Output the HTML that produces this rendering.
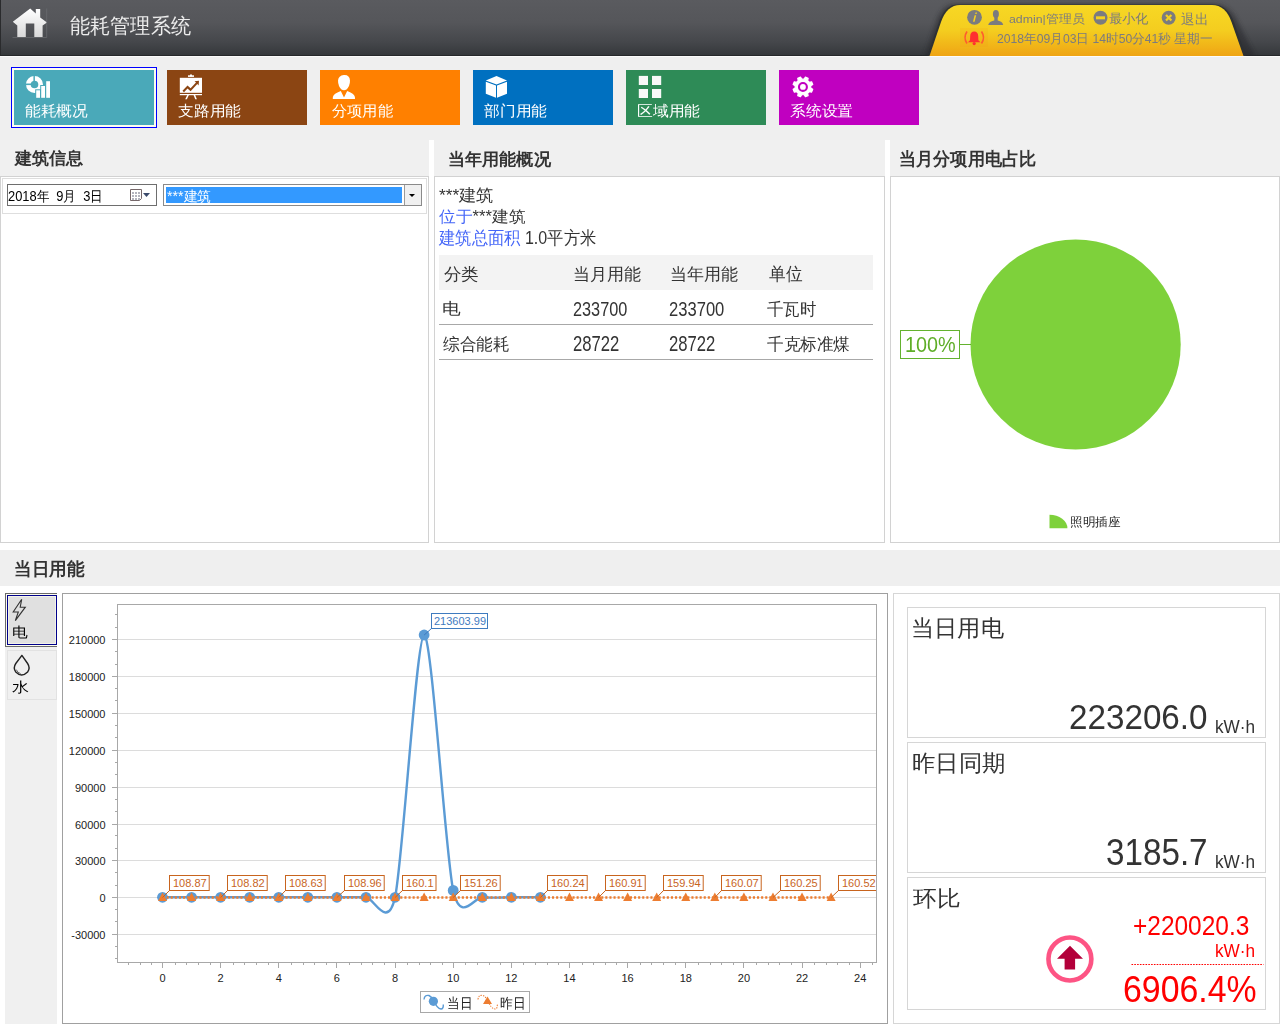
<!DOCTYPE html><html><head><meta charset="utf-8"><title>能耗管理系统</title><style>
*{box-sizing:border-box}
html,body{margin:0;padding:0}
body{width:1280px;height:1024px;overflow:hidden;background:#efefef;font-family:"Liberation Sans",sans-serif;position:relative;color:#333}
.a{position:absolute;white-space:nowrap}
.tile{position:absolute;top:70px;width:140px;height:55px}
.tile .t{position:absolute;left:12px;top:99px;font-size:15px;line-height:20px;color:#fff}
.ptitle{position:absolute;top:140px;height:36px;background:#f0f0f0}
.ptitle span{position:absolute;left:15px;top:7px;font-size:17px;line-height:22px;font-weight:bold;color:#333}
.pbox{position:absolute;top:176px;height:367px;border:1px solid #d2d2d2;background:#fff}
</style></head><body>
<div class="a" style="left:0;top:0;width:1280px;height:56px;background:linear-gradient(#5a5b5f 0%,#55565a 40%,#45474b 75%,#34373a 100%)"></div>
<div class="a" style="left:0;top:0;width:1px;height:56px;background:#2a2b2d"></div>
<div class="a" style="left:0;top:55px;width:1280px;height:1px;background:#26282a"></div>
<div class="a" style="left:0;top:56px;width:1280px;height:1px;background:#fbfbfb"></div>
<svg class="a" style="left:0;top:0" width="60" height="56"><defs><linearGradient id="hg" x1="0" y1="0" x2="0" y2="1"><stop offset="0" stop-color="#ffffff"/><stop offset="1" stop-color="#d9d9d9"/></linearGradient></defs><path d="M30.2 8.6 L35.8 13.6 L35.8 9 L40.2 9 L40.2 17.6 L47 22.4 L42.6 25.4 L42.6 37 L34.3 37 L34.3 23.4 L25.8 23.4 L25.8 37 L17.3 37 L17.3 25.4 L12.8 21.8 Z" fill="url(#hg)"/><path d="M12.5 37.5 H46.7 V8.5" stroke="#707175" stroke-width="0.8" fill="none" opacity="0.8"/></svg>
<svg class="a" style="left:900px;top:0" width="380" height="56">
<defs><linearGradient id="tg" x1="0" y1="0" x2="0" y2="1"><stop offset="0" stop-color="#f7d824"/><stop offset="0.5" stop-color="#f4cd1f"/><stop offset="1" stop-color="#efa414"/></linearGradient>
<filter id="bl" x="-10%" y="-50%" width="120%" height="200%"><feGaussianBlur stdDeviation="2.2"/></filter></defs>
<path d="M24 58 L36 22 Q42 4 56 4 L314 4 Q330 4 338 22 L356 58 Z" fill="#26282b" opacity="0.55" filter="url(#bl)"/>
<path d="M27.5 56 L39 22 Q45 4.5 58 4.5 L313 4.5 Q327.5 4.5 334 22 L346 56 Z" fill="#2e3134" opacity="0.9"/>
<path d="M29.5 56 L41 22 Q47 5 60 5 L312 5 Q325.5 5 331.5 22 L343.5 56 Z" fill="url(#tg)"/>
</svg>
<svg class="a" style="left:966px;top:9px" width="16" height="16"><circle cx="8.5" cy="8.3" r="7.4" fill="#7b7b7f"/><path d="M9.6 3.4 l1.4 0 l-0.4 1.6 l-1.4 0z M8.6 6.2 l1.6 0 l-1.6 6.6 l-1.6 0z" fill="#f5d020"/></svg>
<svg class="a" style="left:988px;top:9px" width="16" height="17"><ellipse cx="7.9" cy="5.1" rx="3.0" ry="4.1" fill="#7b7b7f"/><rect x="6.3" y="7.5" width="3.4" height="4.5" fill="#7b7b7f"/><path d="M0.2 16 Q1.2 12.6 6 11.6 L9.8 11.6 Q14.4 12.6 15.2 16 Z" fill="#7b7b7f"/></svg>
<svg class="a" style="left:1093px;top:10px" width="16" height="16"><circle cx="7.5" cy="7.8" r="7" fill="#7b7b7f"/><rect x="3" y="6.3" width="9" height="3" fill="#f3d020"/></svg>
<svg class="a" style="left:1161px;top:10px" width="16" height="16"><circle cx="7.7" cy="7.8" r="7" fill="#7b7b7f"/><path d="M5 5 L10.4 10.6 M10.4 5 L5 10.6" stroke="#f3d020" stroke-width="2.2"/></svg>
<div class="a" style="left:960px;top:28px;width:28px;height:19px;background:rgba(240,150,20,0.14)"></div>
<svg class="a" style="left:962px;top:29px" width="26" height="18"><path d="M5 2.5 Q1 8.5 5 14.5" stroke="#ff5a30" stroke-width="1.6" fill="none"/><path d="M19.5 2.5 Q23.5 8.5 19.5 14.5" stroke="#ff5a30" stroke-width="1.6" fill="none"/><path d="M12.2 2.4 Q16 2.4 16.2 7 L16.4 11.3 L18.4 13.2 L6 13.2 L8 11.3 L8.2 7 Q8.4 2.4 12.2 2.4Z" fill="#ff3030"/><circle cx="12.2" cy="14.6" r="1.6" fill="#ff3030"/></svg>
<div class="tile" style="left:14px;background:#4aa9b9"></div>
<svg class="a" style="left:0;top:0" width="60" height="130"><path d="M34.5 76 A8.5 8.5 0 1 1 26 84.5 L30.7 84.5 A3.8 3.8 0 1 0 34.5 80.7 Z" fill="#fff"/><path d="M33.6 76 L33.6 80.7 A3.8 3.8 0 0 0 30.7 83.6 L26 83.6 A8.5 8.5 0 0 1 33.6 76Z" fill="#fff"/><rect x="33.7" y="75" width="1.1" height="6.5" fill="#4aa9b9"/><rect x="25" y="84" width="6.5" height="1.1" fill="#4aa9b9"/><rect x="35.2" y="89.3" width="5.8" height="9.5" fill="#4aa9b9"/><rect x="40.2" y="85" width="5.8" height="13.8" fill="#4aa9b9"/><rect x="36.2" y="90.3" width="3.8" height="7.5" fill="#fff"/><rect x="41.2" y="86" width="3.8" height="11.8" fill="#fff"/><rect x="46.2" y="81.2" width="3.8" height="16.6" fill="#fff"/></svg>
<div class="tile" style="left:167px;background:#8b4513"></div>
<svg class="a" style="left:167px;top:70px" width="48" height="35"><rect x="12.8" y="7.8" width="22.2" height="15" fill="#fff"/><rect x="21" y="5.3" width="6" height="1.6" fill="#fff"/><rect x="23" y="4.5" width="2" height="2" fill="#fff"/><rect x="12.8" y="24" width="22.2" height="1.2" fill="#fff"/><path d="M20.3 25 L21.9 25 L19.9 29.3 L18.2 29.3Z M26.6 25 L28.2 25 L29.9 29.3 L28.2 29.3Z" fill="#fff"/><path d="M15.5 20.8 L20.5 15.5 L23.6 18.2 L29 12.5 L27.5 11.3 L32 10.8 L31.6 15.4 L30.3 14 L23.6 21.2 L20.5 18.5 L17 22.2Z" fill="#8b4513"/></svg>
<div class="tile" style="left:320px;background:#ff8000"></div>
<svg class="a" style="left:320px;top:70px" width="48" height="35"><path d="M23.8 5 Q29.5 4.5 30 10.5 Q30 16 26.5 19.5 Q24 20.8 21.5 19.5 Q18 16 18 10.5 Q18.5 5.5 23.8 5Z" fill="#fff"/><path d="M12.8 29 Q12.2 24.5 17.5 22.5 L20.8 21 L24 27.5 L27.2 21 L30.5 22.5 Q35.5 24.5 35 29Z" fill="#fff"/></svg>
<div class="tile" style="left:473px;background:#0070c0"></div>
<svg class="a" style="left:473px;top:70px" width="48" height="35"><path d="M12.8 10.5 L23.5 6 L34 10.5 L23.5 14.5Z" fill="#fff"/><path d="M12.8 11.8 L23 15.5 L23 27.8 L12.8 23.8Z" fill="#fff"/><path d="M24 15.5 L34 11.8 L34 23.8 L24 27.8Z" fill="#fff"/></svg>
<div class="tile" style="left:626px;background:#2e8b57"></div>
<svg class="a" style="left:626px;top:70px" width="48" height="35"><rect x="12.8" y="5.9" width="9.2" height="9.1" fill="#f8f8f8"/><rect x="26" y="5.9" width="9.2" height="9.1" fill="#f8f8f8"/><rect x="12.8" y="19" width="9.2" height="9" fill="#f8f8f8"/><rect x="26" y="19" width="9.2" height="9" fill="#f8f8f8"/></svg>
<div class="tile" style="left:779px;background:#c000c0"></div>
<svg class="a" style="left:779px;top:70px" width="48" height="35"><path d="M25.11 9.13 L26.38 7.14 L29.14 8.28 L28.64 10.59 L30.29 12.24 L32.60 11.74 L33.74 14.50 L31.75 15.77 L31.75 18.11 L33.74 19.38 L32.60 22.14 L30.29 21.64 L28.64 23.29 L29.14 25.60 L26.38 26.74 L25.11 24.75 L22.77 24.75 L21.50 26.74 L18.74 25.60 L19.24 23.29 L17.59 21.64 L15.28 22.14 L14.14 19.38 L16.13 18.11 L16.13 15.77 L14.14 14.50 L15.28 11.74 L17.59 12.24 L19.24 10.59 L18.74 8.28 L21.50 7.14 L22.77 9.13Z" fill="#fff" stroke="#fff" stroke-width="1.2" stroke-linejoin="round"/><circle cx="23.94" cy="16.94" r="3.95" fill="none" stroke="#c000c0" stroke-width="2.1"/></svg>
<div class="a" style="left:11px;top:67px;width:146px;height:61px;border:1px solid #0000ff"></div>
<div class="a" style="left:12px;top:68px;width:144px;height:59px;border:2px solid #fdfdf0"></div>
<div class="a" style="left:0;top:140px;width:1280px;height:410px;background:#fff"></div>
<div class="ptitle" style="left:0px;width:429px"></div>
<div class="pbox" style="left:0px;width:429px"></div>
<div class="ptitle" style="left:434px;width:451px"></div>
<div class="pbox" style="left:434px;width:451px"></div>
<div class="ptitle" style="left:890px;width:390px"></div>
<div class="pbox" style="left:890px;width:390px"></div>
<div class="a" style="left:2px;top:178px;width:425px;height:36px;border:1px solid #dedede;background:#fff"></div>
<div class="a" style="left:7px;top:184px;width:150px;height:22px;border:1px solid #6e6e6e;background:#fff"></div>
<svg class="a" style="left:128px;top:186px" width="26" height="18"><path d="M2.5 3.5 H13.5 V12.5 L11.5 14.5 H2.5 Z" fill="#fff" stroke="#76686a" stroke-width="1"/><g fill="#b3b4be"><rect x="4" y="6" width="2" height="2"/><rect x="7" y="6" width="2" height="2"/><rect x="10" y="6" width="2" height="2"/><rect x="4" y="9" width="2" height="2"/><rect x="7" y="9" width="2" height="2"/><rect x="10" y="9" width="2" height="2"/><rect x="4" y="12" width="2" height="2"/><rect x="7" y="12" width="2" height="2"/><rect x="10" y="12" width="2" height="2"/></g><path d="M15 7 L22 7 L18.5 11Z" fill="#3b4a6b"/></svg>
<div class="a" style="left:163px;top:184px;width:259px;height:22px;border:1px solid #8a8a8a;background:#fff"></div>
<div class="a" style="left:166px;top:187px;width:236px;height:16px;background:#3399ff"></div>
<div class="a" style="left:404px;top:185px;width:17px;height:20px;background:#f0f0f0;border-left:1px solid #9a9a9a"></div>
<svg class="a" style="left:404px;top:185px" width="17" height="20"><path d="M5 9 L11 9 L8 12Z" fill="#000"/></svg>
<div class="a" style="left:439px;top:255px;width:434px;height:35px;background:#f3f3f3"></div>
<div class="a" style="left:439px;top:324px;width:434px;height:1px;background:#a8a8a8"></div>
<div class="a" style="left:439px;top:359px;width:434px;height:1px;background:#a8a8a8"></div>
<svg class="a" style="left:890px;top:176px" width="390" height="367"><circle cx="185.6" cy="168.5" r="105.1" fill="#7ed13b"/><rect x="10.5" y="154.5" width="59" height="28" fill="#fff" stroke="#63b22e" stroke-width="1"/><path d="M70 168.5 H81" stroke="#63b22e" stroke-width="1"/><path d="M159.5 352.2 L159.5 338.8 A17.9 13.4 0 0 1 177.4 352.2 Z" fill="#7ed13b"/></svg>
<div class="a" style="left:0;top:586px;width:1280px;height:438px;background:#fff"></div>
<div class="a" style="left:5px;top:593px;width:52px;height:431px;background:#f0f0f0"></div>
<div class="a" style="left:5px;top:593px;width:52px;height:54px;border:1px solid #6a6a6a;border-right:none;background:#fdfdf0"></div>
<div class="a" style="left:7px;top:595px;width:50px;height:50px;border:1px solid #00008b;background:#e0e0e0"></div>
<div class="a" style="left:8px;top:596px;width:48px;height:48px;border:1px solid #f2f2ea"></div>
<svg class="a" style="left:5px;top:593px" width="52" height="54"><path d="M16.7 6.3 L8.2 19 L13.3 19 L10.3 27.6 L20.3 14.2 L15.2 14.2 Z" fill="none" stroke="#333" stroke-width="1.1" stroke-linejoin="miter"/></svg>
<div class="a" style="left:7px;top:650px;width:50px;height:50px;border:1px solid #e2e2e2;background:#f0f0f0"></div>
<svg class="a" style="left:5px;top:647px" width="52" height="54"><path d="M16.9 8.4 L10.8 16.5 Q7.8 21 10.8 25 Q16.6 31 22.6 25 Q25.6 21 22.6 16.5 Z" fill="none" stroke="#222" stroke-width="1.4" stroke-linejoin="round"/><path d="M11.3 22.6 Q12.2 25.6 15.6 26.6" fill="none" stroke="#555" stroke-width="0.9"/></svg>
<svg class="a" style="left:62px;top:593px" width="826" height="431" font-family="Liberation Sans, sans-serif"><rect x="0.5" y="0.5" width="825" height="430" fill="#fff" stroke="#a0a0a0"/><path d="M56 341.5 H814" stroke="#dcdcdc" stroke-width="1"/><path d="M56 304.5 H814" stroke="#dcdcdc" stroke-width="1"/><path d="M56 267.5 H814" stroke="#dcdcdc" stroke-width="1"/><path d="M56 231.5 H814" stroke="#dcdcdc" stroke-width="1"/><path d="M56 194.5 H814" stroke="#dcdcdc" stroke-width="1"/><path d="M56 157.5 H814" stroke="#dcdcdc" stroke-width="1"/><path d="M56 120.5 H814" stroke="#dcdcdc" stroke-width="1"/><path d="M56 83.5 H814" stroke="#dcdcdc" stroke-width="1"/><path d="M56 46.5 H814" stroke="#dcdcdc" stroke-width="1"/><rect x="55.5" y="11.5" width="759.0" height="358.0" fill="none" stroke="#a8a8a8"/><path d="M50 341.5 H55" stroke="#a8a8a8"/><text x="43.5" y="345.5" font-size="11" text-anchor="end" fill="#222">-30000</text><path d="M50 304.5 H55" stroke="#a8a8a8"/><text x="43.5" y="308.5" font-size="11" text-anchor="end" fill="#222">0</text><path d="M50 267.5 H55" stroke="#a8a8a8"/><text x="43.5" y="271.5" font-size="11" text-anchor="end" fill="#222">30000</text><path d="M50 231.5 H55" stroke="#a8a8a8"/><text x="43.5" y="235.5" font-size="11" text-anchor="end" fill="#222">60000</text><path d="M50 194.5 H55" stroke="#a8a8a8"/><text x="43.5" y="198.5" font-size="11" text-anchor="end" fill="#222">90000</text><path d="M50 157.5 H55" stroke="#a8a8a8"/><text x="43.5" y="161.5" font-size="11" text-anchor="end" fill="#222">120000</text><path d="M50 120.5 H55" stroke="#a8a8a8"/><text x="43.5" y="124.5" font-size="11" text-anchor="end" fill="#222">150000</text><path d="M50 83.5 H55" stroke="#a8a8a8"/><text x="43.5" y="87.5" font-size="11" text-anchor="end" fill="#222">180000</text><path d="M50 46.5 H55" stroke="#a8a8a8"/><text x="43.5" y="50.5" font-size="11" text-anchor="end" fill="#222">210000</text><path d="M53 365.5 H55" stroke="#a8a8a8"/><path d="M53 353.5 H55" stroke="#a8a8a8"/><path d="M53 328.5 H55" stroke="#a8a8a8"/><path d="M53 316.5 H55" stroke="#a8a8a8"/><path d="M53 292.5 H55" stroke="#a8a8a8"/><path d="M53 279.5 H55" stroke="#a8a8a8"/><path d="M53 255.5 H55" stroke="#a8a8a8"/><path d="M53 242.5 H55" stroke="#a8a8a8"/><path d="M53 218.5 H55" stroke="#a8a8a8"/><path d="M53 206.5 H55" stroke="#a8a8a8"/><path d="M53 181.5 H55" stroke="#a8a8a8"/><path d="M53 169.5 H55" stroke="#a8a8a8"/><path d="M53 144.5 H55" stroke="#a8a8a8"/><path d="M53 132.5 H55" stroke="#a8a8a8"/><path d="M53 107.5 H55" stroke="#a8a8a8"/><path d="M53 95.5 H55" stroke="#a8a8a8"/><path d="M53 71.5 H55" stroke="#a8a8a8"/><path d="M53 58.5 H55" stroke="#a8a8a8"/><path d="M53 34.5 H55" stroke="#a8a8a8"/><path d="M53 21.5 H55" stroke="#a8a8a8"/><path d="M66.5 369 V372" stroke="#a8a8a8"/><path d="M78.5 369 V372" stroke="#a8a8a8"/><path d="M89.5 369 V372" stroke="#a8a8a8"/><path d="M100.5 369 V375" stroke="#a8a8a8"/><text x="100.5" y="389" font-size="11" text-anchor="middle" fill="#222">0</text><path d="M113.5 369 V372" stroke="#a8a8a8"/><path d="M124.5 369 V372" stroke="#a8a8a8"/><path d="M136.5 369 V372" stroke="#a8a8a8"/><path d="M148.5 369 V372" stroke="#a8a8a8"/><path d="M158.5 369 V375" stroke="#a8a8a8"/><text x="158.64" y="389" font-size="11" text-anchor="middle" fill="#222">2</text><path d="M171.5 369 V372" stroke="#a8a8a8"/><path d="M182.5 369 V372" stroke="#a8a8a8"/><path d="M194.5 369 V372" stroke="#a8a8a8"/><path d="M206.5 369 V372" stroke="#a8a8a8"/><path d="M216.5 369 V375" stroke="#a8a8a8"/><text x="216.77999999999997" y="389" font-size="11" text-anchor="middle" fill="#222">4</text><path d="M229.5 369 V372" stroke="#a8a8a8"/><path d="M241.5 369 V372" stroke="#a8a8a8"/><path d="M252.5 369 V372" stroke="#a8a8a8"/><path d="M264.5 369 V372" stroke="#a8a8a8"/><path d="M274.5 369 V375" stroke="#a8a8a8"/><text x="274.92" y="389" font-size="11" text-anchor="middle" fill="#222">6</text><path d="M287.5 369 V372" stroke="#a8a8a8"/><path d="M299.5 369 V372" stroke="#a8a8a8"/><path d="M310.5 369 V372" stroke="#a8a8a8"/><path d="M322.5 369 V372" stroke="#a8a8a8"/><path d="M333.5 369 V375" stroke="#a8a8a8"/><text x="333.06" y="389" font-size="11" text-anchor="middle" fill="#222">8</text><path d="M345.5 369 V372" stroke="#a8a8a8"/><path d="M357.5 369 V372" stroke="#a8a8a8"/><path d="M368.5 369 V372" stroke="#a8a8a8"/><path d="M380.5 369 V372" stroke="#a8a8a8"/><path d="M391.5 369 V375" stroke="#a8a8a8"/><text x="391.2" y="389" font-size="11" text-anchor="middle" fill="#222">10</text><path d="M403.5 369 V372" stroke="#a8a8a8"/><path d="M415.5 369 V372" stroke="#a8a8a8"/><path d="M427.5 369 V372" stroke="#a8a8a8"/><path d="M438.5 369 V372" stroke="#a8a8a8"/><path d="M449.5 369 V375" stroke="#a8a8a8"/><text x="449.34000000000003" y="389" font-size="11" text-anchor="middle" fill="#222">12</text><path d="M461.5 369 V372" stroke="#a8a8a8"/><path d="M473.5 369 V372" stroke="#a8a8a8"/><path d="M485.5 369 V372" stroke="#a8a8a8"/><path d="M496.5 369 V372" stroke="#a8a8a8"/><path d="M507.5 369 V375" stroke="#a8a8a8"/><text x="507.48" y="389" font-size="11" text-anchor="middle" fill="#222">14</text><path d="M520.5 369 V372" stroke="#a8a8a8"/><path d="M531.5 369 V372" stroke="#a8a8a8"/><path d="M543.5 369 V372" stroke="#a8a8a8"/><path d="M554.5 369 V372" stroke="#a8a8a8"/><path d="M565.5 369 V375" stroke="#a8a8a8"/><text x="565.62" y="389" font-size="11" text-anchor="middle" fill="#222">16</text><path d="M578.5 369 V372" stroke="#a8a8a8"/><path d="M589.5 369 V372" stroke="#a8a8a8"/><path d="M601.5 369 V372" stroke="#a8a8a8"/><path d="M613.5 369 V372" stroke="#a8a8a8"/><path d="M623.5 369 V375" stroke="#a8a8a8"/><text x="623.76" y="389" font-size="11" text-anchor="middle" fill="#222">18</text><path d="M636.5 369 V372" stroke="#a8a8a8"/><path d="M648.5 369 V372" stroke="#a8a8a8"/><path d="M659.5 369 V372" stroke="#a8a8a8"/><path d="M671.5 369 V372" stroke="#a8a8a8"/><path d="M681.5 369 V375" stroke="#a8a8a8"/><text x="681.9" y="389" font-size="11" text-anchor="middle" fill="#222">20</text><path d="M694.5 369 V372" stroke="#a8a8a8"/><path d="M706.5 369 V372" stroke="#a8a8a8"/><path d="M717.5 369 V372" stroke="#a8a8a8"/><path d="M729.5 369 V372" stroke="#a8a8a8"/><path d="M740.5 369 V375" stroke="#a8a8a8"/><text x="740.04" y="389" font-size="11" text-anchor="middle" fill="#222">22</text><path d="M752.5 369 V372" stroke="#a8a8a8"/><path d="M764.5 369 V372" stroke="#a8a8a8"/><path d="M775.5 369 V372" stroke="#a8a8a8"/><path d="M787.5 369 V372" stroke="#a8a8a8"/><path d="M798.5 369 V375" stroke="#a8a8a8"/><text x="798.1800000000001" y="389" font-size="11" text-anchor="middle" fill="#222">24</text><path d="M810.5 369 V372" stroke="#a8a8a8"/><defs><clipPath id="pc"><rect x="56" y="12" width="758" height="357"/></clipPath></defs><g clip-path="url(#pc)"><path d="M100.50 304.28 C104.30 304.28 121.96 304.28 129.57 304.28 C137.18 304.28 151.03 304.28 158.64 304.28 C166.25 304.28 180.10 304.28 187.71 304.28 C195.32 304.28 209.17 304.28 216.78 304.28 C224.39 304.28 238.24 304.28 245.85 304.28 C253.46 304.28 267.31 304.28 274.92 304.28 C282.53 304.28 296.38 304.28 303.99 304.28 C311.60 304.28 325.45 338.59 333.06 304.28 C340.67 269.97 354.52 42.92 362.13 42.02 C369.74 41.12 383.59 263.09 391.20 297.40 C398.81 331.71 412.66 303.38 420.27 304.28 C427.88 305.18 441.73 304.28 449.34 304.28 C456.95 304.28 474.61 304.28 478.41 304.28" fill="none" stroke="#5b9bd5" stroke-width="2.4"/><circle cx="100.50" cy="304.28" r="5.4" fill="#5b9bd5"/><circle cx="129.57" cy="304.28" r="5.4" fill="#5b9bd5"/><circle cx="158.64" cy="304.28" r="5.4" fill="#5b9bd5"/><circle cx="187.71" cy="304.28" r="5.4" fill="#5b9bd5"/><circle cx="216.78" cy="304.28" r="5.4" fill="#5b9bd5"/><circle cx="245.85" cy="304.28" r="5.4" fill="#5b9bd5"/><circle cx="274.92" cy="304.28" r="5.4" fill="#5b9bd5"/><circle cx="303.99" cy="304.28" r="5.4" fill="#5b9bd5"/><circle cx="333.06" cy="304.28" r="5.4" fill="#5b9bd5"/><circle cx="362.13" cy="42.02" r="5.4" fill="#5b9bd5"/><circle cx="391.20" cy="297.40" r="5.4" fill="#5b9bd5"/><circle cx="420.27" cy="304.28" r="5.4" fill="#5b9bd5"/><circle cx="449.34" cy="304.28" r="5.4" fill="#5b9bd5"/><circle cx="478.41" cy="304.28" r="5.4" fill="#5b9bd5"/><path d="M100.50 304.5 H769.11" fill="none" stroke="#ed7d31" stroke-width="2.6" stroke-dasharray="2.1 2"/><path d="M96.00 308 L105.00 308 L100.50 299.5Z" fill="#ed7d31"/><path d="M125.07 308 L134.07 308 L129.57 299.5Z" fill="#ed7d31"/><path d="M154.14 308 L163.14 308 L158.64 299.5Z" fill="#ed7d31"/><path d="M183.21 308 L192.21 308 L187.71 299.5Z" fill="#ed7d31"/><path d="M212.28 308 L221.28 308 L216.78 299.5Z" fill="#ed7d31"/><path d="M241.35 308 L250.35 308 L245.85 299.5Z" fill="#ed7d31"/><path d="M270.42 308 L279.42 308 L274.92 299.5Z" fill="#ed7d31"/><path d="M299.49 308 L308.49 308 L303.99 299.5Z" fill="#ed7d31"/><path d="M328.56 308 L337.56 308 L333.06 299.5Z" fill="#ed7d31"/><path d="M357.63 308 L366.63 308 L362.13 299.5Z" fill="#ed7d31"/><path d="M386.70 308 L395.70 308 L391.20 299.5Z" fill="#ed7d31"/><path d="M415.77 308 L424.77 308 L420.27 299.5Z" fill="#ed7d31"/><path d="M444.84 308 L453.84 308 L449.34 299.5Z" fill="#ed7d31"/><path d="M473.91 308 L482.91 308 L478.41 299.5Z" fill="#ed7d31"/><path d="M502.98 308 L511.98 308 L507.48 299.5Z" fill="#ed7d31"/><path d="M532.05 308 L541.05 308 L536.55 299.5Z" fill="#ed7d31"/><path d="M561.12 308 L570.12 308 L565.62 299.5Z" fill="#ed7d31"/><path d="M590.19 308 L599.19 308 L594.69 299.5Z" fill="#ed7d31"/><path d="M619.26 308 L628.26 308 L623.76 299.5Z" fill="#ed7d31"/><path d="M648.33 308 L657.33 308 L652.83 299.5Z" fill="#ed7d31"/><path d="M677.40 308 L686.40 308 L681.90 299.5Z" fill="#ed7d31"/><path d="M706.47 308 L715.47 308 L710.97 299.5Z" fill="#ed7d31"/><path d="M735.54 308 L744.54 308 L740.04 299.5Z" fill="#ed7d31"/><path d="M764.61 308 L773.61 308 L769.11 299.5Z" fill="#ed7d31"/><path d="M100.50 304.5 L107.50 297.5" stroke="#c8641e" stroke-width="1"/><rect x="107.50" y="282.5" width="39.7" height="15" fill="#fff" stroke="#c8641e"/><text x="111.00" y="294" font-size="11" fill="#c8641e">108.87</text><path d="M158.64 304.5 L165.50 297.5" stroke="#c8641e" stroke-width="1"/><rect x="165.50" y="282.5" width="39.7" height="15" fill="#fff" stroke="#c8641e"/><text x="169.00" y="294" font-size="11" fill="#c8641e">108.82</text><path d="M216.78 304.5 L223.50 297.5" stroke="#c8641e" stroke-width="1"/><rect x="223.50" y="282.5" width="39.7" height="15" fill="#fff" stroke="#c8641e"/><text x="227.00" y="294" font-size="11" fill="#c8641e">108.63</text><path d="M274.92 304.5 L282.50 297.5" stroke="#c8641e" stroke-width="1"/><rect x="282.50" y="282.5" width="39.7" height="15" fill="#fff" stroke="#c8641e"/><text x="286.00" y="294" font-size="11" fill="#c8641e">108.96</text><path d="M333.06 304.5 L340.50 297.5" stroke="#c8641e" stroke-width="1"/><rect x="340.50" y="282.5" width="33.5" height="15" fill="#fff" stroke="#c8641e"/><text x="344.00" y="294" font-size="11" fill="#c8641e">160.1</text><path d="M391.20 304.5 L398.50 297.5" stroke="#c8641e" stroke-width="1"/><rect x="398.50" y="282.5" width="39.7" height="15" fill="#fff" stroke="#c8641e"/><text x="402.00" y="294" font-size="11" fill="#c8641e">151.26</text><path d="M478.41 304.5 L485.50 297.5" stroke="#c8641e" stroke-width="1"/><rect x="485.50" y="282.5" width="39.7" height="15" fill="#fff" stroke="#c8641e"/><text x="489.00" y="294" font-size="11" fill="#c8641e">160.24</text><path d="M536.55 304.5 L543.50 297.5" stroke="#c8641e" stroke-width="1"/><rect x="543.50" y="282.5" width="39.7" height="15" fill="#fff" stroke="#c8641e"/><text x="547.00" y="294" font-size="11" fill="#c8641e">160.91</text><path d="M594.69 304.5 L601.50 297.5" stroke="#c8641e" stroke-width="1"/><rect x="601.50" y="282.5" width="39.7" height="15" fill="#fff" stroke="#c8641e"/><text x="605.00" y="294" font-size="11" fill="#c8641e">159.94</text><path d="M652.83 304.5 L659.50 297.5" stroke="#c8641e" stroke-width="1"/><rect x="659.50" y="282.5" width="39.7" height="15" fill="#fff" stroke="#c8641e"/><text x="663.00" y="294" font-size="11" fill="#c8641e">160.07</text><path d="M710.97 304.5 L718.50 297.5" stroke="#c8641e" stroke-width="1"/><rect x="718.50" y="282.5" width="39.7" height="15" fill="#fff" stroke="#c8641e"/><text x="722.00" y="294" font-size="11" fill="#c8641e">160.25</text><path d="M769.11 304.5 L776.50 297.5" stroke="#c8641e" stroke-width="1"/><rect x="776.50" y="282.5" width="39.7" height="15" fill="#fff" stroke="#c8641e"/><text x="780.00" y="294" font-size="11" fill="#c8641e">160.52</text><path d="M362.13 42.02 L369.5 35.5" stroke="#3f7bbf"/><rect x="369.5" y="20.5" width="56" height="15" fill="#fff" stroke="#3f7bbf"/><text x="372" y="32" font-size="11" fill="#3f7bbf">213603.99</text></g><rect x="358.5" y="398.5" width="109" height="21" fill="#fff" stroke="#a8a8a8"/><path d="M362 406.5 Q362.5 401.5 367 402.5 Q370 404 372 408 Q375 415.5 379 416 Q381.5 416 381.3 411.5" stroke="#5b9bd5" fill="none" stroke-width="1.4"/><circle cx="371.4" cy="408.29999999999995" r="4.6" fill="#5b9bd5"/><path d="M416 406.5 Q416.5 401.5 421 402.5 Q424 404 426 408 Q429 415.5 433 416 Q435.5 416 435.3 411.5" stroke="#ed7d31" fill="none" stroke-width="1.1" stroke-dasharray="1.3 1.2"/><path d="M421 411 L430 411 L425.5 403.5Z" fill="#ed7d31"/></svg>
<div class="a" style="left:893px;top:593px;width:387px;height:431px;border:1px solid #d6d6d6;background:#fff"></div>
<div class="a" style="left:907px;top:607px;width:359px;height:131px;border:1px solid #d6d6d6;background:#fff"></div>
<div class="a" style="left:907px;top:742px;width:359px;height:131px;border:1px solid #d6d6d6;background:#fff"></div>
<div class="a" style="left:907px;top:877px;width:359px;height:133px;border:1px solid #d6d6d6;background:#fff"></div>
<svg class="a" style="left:1040px;top:930px" width="60" height="60"><circle cx="29.9" cy="29" r="21.45" fill="none" stroke="#fd5484" stroke-width="4.6"/><path d="M30 15.8 L43 28.7 L35.1 28.7 L35.1 39.5 L24.6 39.5 L24.6 28.7 L17 28.7Z" fill="#b3003a"/></svg>
<svg class="a" style="left:1131px;top:964px" width="133" height="1"><path d="M0.5 0.5 H132.5" stroke="#ff0000" stroke-width="1" stroke-dasharray="1.6 1.2"/></svg>
<div id="title" class="a" style="left:70.00px;top:15.47px;font-size:21.09px;line-height:1;transform:scaleX(0.9599);transform-origin:0 0;color:#ececec">能耗管理系统</div>
<div id="admin" class="a" style="left:1009.00px;top:13.62px;font-size:11.50px;line-height:1;transform:scaleX(1.0729);transform-origin:0 0;color:#7b7b7f">admin|管理员</div>
<div id="minz" class="a" style="left:1109.00px;top:13.47px;font-size:12.50px;line-height:1;transform:scaleX(1.0000);transform-origin:0 0;color:#7b7b7f">最小化</div>
<div id="exit" class="a" style="left:1181.00px;top:12.32px;font-size:14.00px;line-height:1;transform:scaleX(0.9650);transform-origin:0 0;color:#7b7b7f">退出</div>
<div id="date" class="a" style="left:997.00px;top:32.50px;font-size:12.54px;line-height:1;transform:scaleX(0.9719);transform-origin:0 0;color:#7b7b7f">2018年09月03日 14时50分41秒 星期一</div>
<div id="tile0" class="a" style="left:25.00px;top:103.19px;font-size:15.06px;line-height:1;transform:scaleX(1.0491);transform-origin:0 0;color:#fff">能耗概况</div>
<div id="tile1" class="a" style="left:178.00px;top:104.22px;font-size:14.81px;line-height:1;transform:scaleX(1.0504);transform-origin:0 0;color:#fff">支路用能</div>
<div id="tile2" class="a" style="left:332.00px;top:104.22px;font-size:14.81px;line-height:1;transform:scaleX(1.0163);transform-origin:0 0;color:#fff">分项用能</div>
<div id="tile3" class="a" style="left:484.00px;top:104.22px;font-size:14.81px;line-height:1;transform:scaleX(1.0504);transform-origin:0 0;color:#fff">部门用能</div>
<div id="tile4" class="a" style="left:637.00px;top:104.22px;font-size:14.81px;line-height:1;transform:scaleX(1.0504);transform-origin:0 0;color:#fff">区域用能</div>
<div id="tile5" class="a" style="left:790.00px;top:104.22px;font-size:14.81px;line-height:1;transform:scaleX(1.0508);transform-origin:0 0;color:#fff">系统设置</div>
<div id="pt0" class="a" style="left:15.00px;top:149.95px;font-size:17.03px;line-height:1;transform:scaleX(1.0056);transform-origin:0 0;color:#333;font-weight:bold">建筑信息</div>
<div id="pt1" class="a" style="left:448.00px;top:150.95px;font-size:17.03px;line-height:1;transform:scaleX(1.0064);transform-origin:0 0;color:#333;font-weight:bold">当年用能概况</div>
<div id="pt2" class="a" style="left:899.00px;top:149.82px;font-size:18.12px;line-height:1;transform:scaleX(0.9521);transform-origin:0 0;color:#333;font-weight:bold">当月分项用电占比</div>
<div id="pt3" class="a" style="left:14.00px;top:560.83px;font-size:17.95px;line-height:1;transform:scaleX(0.9772);transform-origin:0 0;color:#333;font-weight:bold">当日用能</div>
<div id="datebox" class="a" style="left:8.00px;top:189.28px;font-size:14.35px;line-height:1;transform:scaleX(0.8972);transform-origin:0 0;color:#000">2018年&nbsp;&nbsp;9月&nbsp;&nbsp;3日</div>
<div id="selbox" class="a" style="left:167.00px;top:189.28px;font-size:14.35px;line-height:1;transform:scaleX(0.9862);transform-origin:0 0;color:#fff">***建筑</div>
<div id="m1" class="a" style="left:439.00px;top:186.95px;font-size:17.10px;line-height:1;transform:scaleX(1.0144);transform-origin:0 0;color:#333">***建筑</div>
<div id="m2" class="a" style="left:439.00px;top:209.09px;font-size:15.91px;line-height:1;transform:scaleX(1.0451);transform-origin:0 0;color:#333"><span style="color:#4667f8">位于</span>***建筑</div>
<div id="m3" class="a" style="left:439.00px;top:229.87px;font-size:17.72px;line-height:1;transform:scaleX(0.9054);transform-origin:0 0;color:#333"><span style="color:#4667f8">建筑总面积</span> 1.0平方米</div>
<div id="th0" class="a" style="left:444.00px;top:265.95px;font-size:17.10px;line-height:1;transform:scaleX(1.0283);transform-origin:0 0;color:#333">分类</div>
<div id="th1" class="a" style="left:573.00px;top:265.95px;font-size:17.10px;line-height:1;transform:scaleX(1.0018);transform-origin:0 0;color:#333">当月用能</div>
<div id="th2" class="a" style="left:670.00px;top:265.95px;font-size:17.10px;line-height:1;transform:scaleX(1.0018);transform-origin:0 0;color:#333">当年用能</div>
<div id="th3" class="a" style="left:769.00px;top:265.86px;font-size:17.83px;line-height:1;transform:scaleX(0.9279);transform-origin:0 0;color:#333">单位</div>
<div id="r00" class="a" style="left:442.00px;top:301.09px;font-size:15.91px;line-height:1;transform:scaleX(1.1660);transform-origin:0 0;color:#333">电</div>
<div id="r01" class="a" style="left:573.00px;top:298.57px;font-size:20.21px;line-height:1;transform:scaleX(0.8063);transform-origin:0 0;color:#333">233700</div>
<div id="r02" class="a" style="left:669.00px;top:298.57px;font-size:20.21px;line-height:1;transform:scaleX(0.8216);transform-origin:0 0;color:#333">233700</div>
<div id="r03" class="a" style="left:767.00px;top:302.02px;font-size:16.54px;line-height:1;transform:scaleX(0.9637);transform-origin:0 0;color:#333">千瓦时</div>
<div id="r10" class="a" style="left:443.00px;top:337.02px;font-size:16.54px;line-height:1;transform:scaleX(0.9752);transform-origin:0 0;color:#333">综合能耗</div>
<div id="r11" class="a" style="left:573.00px;top:334.42px;font-size:21.47px;line-height:1;transform:scaleX(0.7760);transform-origin:0 0;color:#333">28722</div>
<div id="r12" class="a" style="left:669.00px;top:334.42px;font-size:21.47px;line-height:1;transform:scaleX(0.7760);transform-origin:0 0;color:#333">28722</div>
<div id="r13" class="a" style="left:767.00px;top:335.94px;font-size:17.15px;line-height:1;transform:scaleX(0.9711);transform-origin:0 0;color:#333">千克标准煤</div>
<div id="pct" class="a" style="left:905.00px;top:335.42px;font-size:21.47px;line-height:1;transform:scaleX(0.9236);transform-origin:0 0;color:#5fae28">100%</div>
<div id="leg" class="a" style="left:1070.00px;top:516.58px;font-size:11.86px;line-height:1;transform:scaleX(1.0520);transform-origin:0 0;color:#222">照明插座</div>
<div id="bdian" class="a" style="left:12.00px;top:625.28px;font-size:14.35px;line-height:1;transform:scaleX(1.1278);transform-origin:0 0;color:#000">电</div>
<div id="bshui" class="a" style="left:12.00px;top:680.28px;font-size:14.35px;line-height:1;transform:scaleX(1.2146);transform-origin:0 0;color:#000">水</div>
<div id="s1" class="a" style="left:911.00px;top:617.20px;font-size:23.38px;line-height:1;transform:scaleX(1.0089);transform-origin:0 0;color:#333">当日用电</div>
<div id="v1" class="a" style="left:1069.00px;top:699.74px;font-size:35.56px;line-height:1;transform:scaleX(0.9343);transform-origin:0 0;color:#333">223206.0</div>
<div id="u1" class="a" style="left:1215.00px;top:717.77px;font-size:18.54px;line-height:1;transform:scaleX(0.9280);transform-origin:0 0;color:#333">kW·h</div>
<div id="s2" class="a" style="left:912.00px;top:752.20px;font-size:23.38px;line-height:1;transform:scaleX(1.0190);transform-origin:0 0;color:#333">昨日同期</div>
<div id="v2" class="a" style="left:1106.00px;top:834.62px;font-size:36.54px;line-height:1;transform:scaleX(0.9091);transform-origin:0 0;color:#333">3185.7</div>
<div id="u2" class="a" style="left:1215.00px;top:852.77px;font-size:18.54px;line-height:1;transform:scaleX(0.9280);transform-origin:0 0;color:#333">kW·h</div>
<div id="s3" class="a" style="left:913.00px;top:888.34px;font-size:22.18px;line-height:1;transform:scaleX(1.0769);transform-origin:0 0;color:#333">环比</div>
<div id="v3" class="a" style="left:1133.00px;top:911.73px;font-size:27.25px;line-height:1;transform:scaleX(0.8978);transform-origin:0 0;color:#ff0000">+220020.3</div>
<div id="u3" class="a" style="left:1215.00px;top:941.77px;font-size:18.54px;line-height:1;transform:scaleX(0.9280);transform-origin:0 0;color:#ff0000">kW·h</div>
<div id="v4" class="a" style="left:1123.00px;top:971.62px;font-size:36.54px;line-height:1;transform:scaleX(0.9262);transform-origin:0 0;color:#ff0000">6906.4%</div>
<div id="lg1" class="a" style="left:447.00px;top:997.37px;font-size:13.58px;line-height:1;transform:scaleX(0.9090);transform-origin:0 0;color:#222">当日</div>
<div id="lg2" class="a" style="left:500.00px;top:997.37px;font-size:13.58px;line-height:1;transform:scaleX(0.9117);transform-origin:0 0;color:#222">昨日</div>
</body></html>
